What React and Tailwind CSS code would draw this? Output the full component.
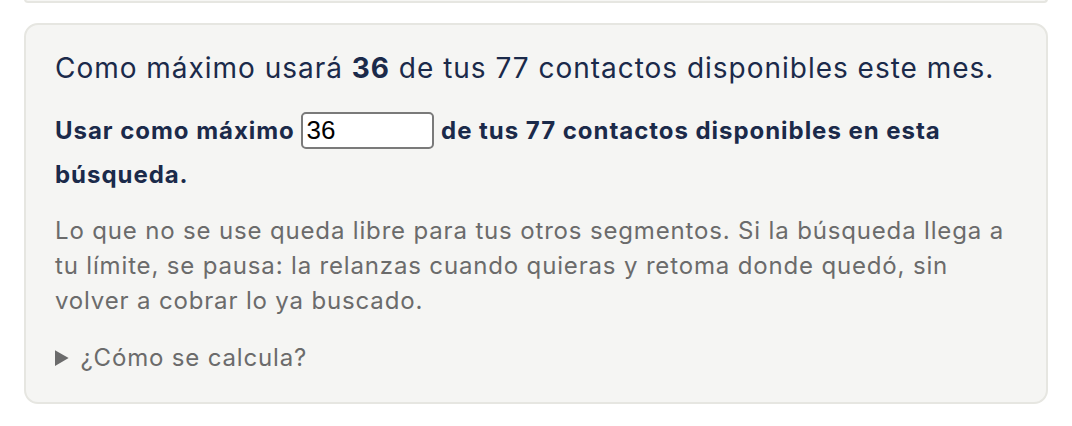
import React, { useState } from "react";

const App = () => {
  const [limit, setLimit] = useState("36");

  return (
    <div className="min-h-screen bg-white px-6 font-['Inter','Noto_Sans',sans-serif]">
      {/* tail of the previous card */}
      <div className="h-[4px] -mt-px rounded-b-[14px] border-2 border-t-0 border-[#e6e6e1] bg-[#f6f6f4]"></div>

      <div className="mt-5 rounded-[14px] border-2 border-[#e6e6e1] bg-[#f5f5f3] px-[29px] pt-[24px] pb-[27px]">
        <h2 className="text-[28px] leading-[39px] tracking-[0.035em] text-[#1b2a4a]">
          Como máximo usará <strong className="font-bold">36</strong> de tus 77 contactos disponibles este mes.
        </h2>

        <p className="mt-[21px] text-[24px] font-bold leading-[44px] tracking-[0.04em] text-[#1b2a4a]">
          Usar como máximo{" "}
          <input
            type="number"
            value={limit}
            onChange={(e) => setLimit(e.target.value)}
            className="h-[37px] w-[133px] rounded-[5px] border-2 border-[#7a7a7a] bg-white px-[3px] font-['Liberation_Sans',Arial,sans-serif] text-[26px] font-normal tracking-normal text-black [appearance:textfield] [&::-webkit-inner-spin-button]:appearance-none"
          />{" "}
          de tus 77 contactos disponibles en esta búsqueda.
        </p>

        <p className="mt-[16px] text-[24px] leading-[35px] tracking-[0.035em] text-[#6b6b6b]">
          Lo que no se use queda libre para tus otros segmentos. Si la búsqueda llega a tu límite, se pausa: la relanzas cuando quieras y retoma donde quedó, sin volver a cobrar lo ya buscado.
        </p>

        <details className="mt-[22px] text-[24px] leading-[35px] tracking-[0.035em] text-[#6b6b6b]">
          <summary className="cursor-pointer">¿Cómo se calcula?</summary>
          <p>El límite se reparte entre las búsquedas activas del mes.</p>
        </details>
      </div>
    </div>
  );
};

export default App;
